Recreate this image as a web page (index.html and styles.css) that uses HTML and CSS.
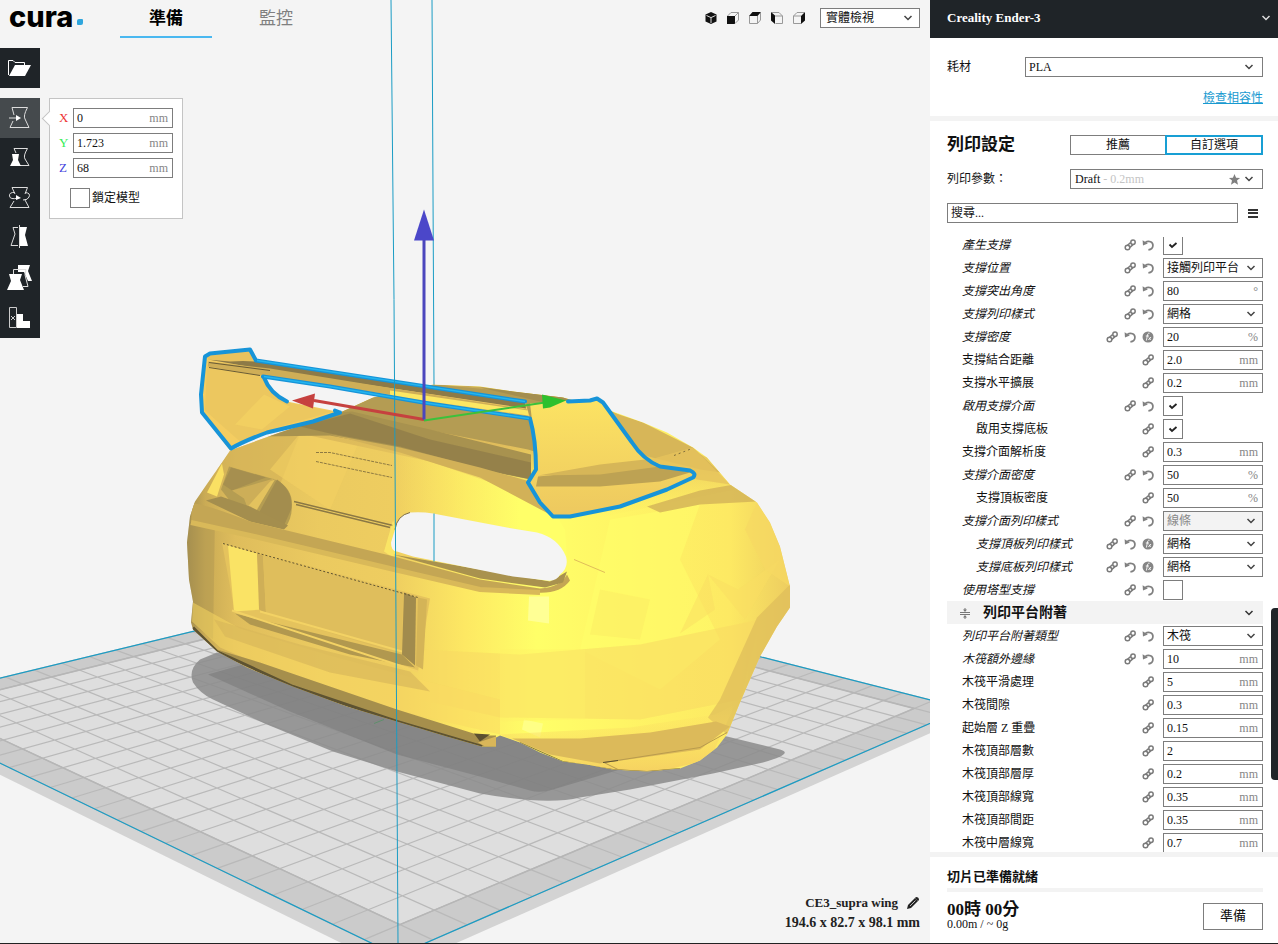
FILE: index.html
```html
<!DOCTYPE html>
<html lang="zh-Hant">
<head>
<meta charset="utf-8">
<title>Cura</title>
<link rel="stylesheet" href="styles.css">
</head>
<body>
<svg class="defs" aria-hidden="true">
  <symbol id="link" viewBox="0 0 14 14"><g fill="none" stroke="#7a7a7a" stroke-width="1.500"><circle cx="4.500" cy="9.500" r="2.300"/><circle cx="10" cy="4.200" r="2.200"/><path d="M4.500 7.200 7.600 4.600M6.900 9.400 10 6.600"/></g></symbol>
  <symbol id="undo" viewBox="0 0 14 14"><path d="M1.600 2.200 2 7.400 6.800 5.600Z" fill="#808080"/><path d="M4 4.600C8 1.800 12.300 4 11.900 7.800 11.700 10 10 11.400 7.400 11.800" fill="none" stroke="#808080" stroke-width="1.700"/></symbol>
  <symbol id="fx" viewBox="0 0 14 14"><circle cx="7" cy="7" r="5.500" fill="#858585"/><path d="M8.600 3.200C6.800 2.800 6.600 4.500 6.300 6L5.400 10.500M4.800 6H8M7.400 10 10 7M8 7.500 9.600 10" fill="none" stroke="#fff" stroke-width=".9"/></symbol>
</svg>
<div class="app">
  <main class="stage">
    <svg class="scene" viewBox="0 0 930 944" preserveAspectRatio="xMidYMid slice" role="img" aria-label="CE3_supra wing">
      <defs>
        <linearGradient id="paint" gradientUnits="userSpaceOnUse" x1="187" y1="0" x2="790" y2="0">
          <stop offset="0" stop-color="#a48e4f"/><stop offset=".03" stop-color="#caab55"/><stop offset=".08" stop-color="#dfbd5c"/><stop offset=".22" stop-color="#ebca60"/><stop offset=".34" stop-color="#eecd60"/><stop offset=".46" stop-color="#fde863"/><stop offset=".58" stop-color="#ffff68"/><stop offset=".72" stop-color="#fff565"/><stop offset=".9" stop-color="#fde963"/><stop offset="1" stop-color="#edcd60"/>
        </linearGradient>
        <linearGradient id="crest" gradientUnits="userSpaceOnUse" x1="390" y1="0" x2="520" y2="0"><stop offset="0" stop-color="#f6d862" stop-opacity="0"/><stop offset="1" stop-color="#ffff68"/></linearGradient>
        <linearGradient id="deck" x1="0" y1="0" x2="0" y2="1"><stop offset="0" stop-color="#c8aa55"/><stop offset=".45" stop-color="#e0bd5b"/><stop offset="1" stop-color="#fbe262" stop-opacity="0"/></linearGradient>
        <linearGradient id="fin" x1="0" y1="0" x2="0" y2="1"><stop offset="0" stop-color="#fce363"/><stop offset="1" stop-color="#edc85f"/></linearGradient>
        <linearGradient id="lower" x1="0" y1="0" x2="0" y2="1"><stop offset="0" stop-color="#fbdc62" stop-opacity="0"/><stop offset="1" stop-color="#f5d061"/></linearGradient>
        <clipPath id="bodyClip"><path d="M230 451 222 463 208 483 195 502 190 517 187 543 189 580 193 602 191 623 193 630 217 652 247 668 293 687 347 707 397 722 447 737 482 747H496V738L500 736 520 743 540 753 563 762 587 765 613 770 647 772 680 769 700 761 717 748 727 735 740 703 760 657 777 627 790 608V587L780 547 770 523 757 503 730 485 707 458 693 448 667 433 643 423 610 411 563 398 513 392 480 387 433 385 373 398 340 413 280 433Z"/></clipPath>
      </defs>
      <g id="bed"></g>
      <path d="M217 653 200 660Q188 670 193 683 200 694 213 700L267 725 333 752 397 772 480 794Q547 806 580 798L630 790 713 774 763 763Q795 754 780 750L727 737Z" fill="#8b8b8b" opacity=".85"/>
      <path d="M208 675 260 660 500 730 620 770 553 790Q540 794 530 791L480 777 397 755 290 712Z" fill="#7f7f7f" opacity=".7"/>
      <path d="M374 724 384 720" stroke="#5f8f6c"/>
      <path d="M432 0 434 386" stroke="#1a9cc4"/>
      <g clip-path="url(#bodyClip)">
        <path d="M180 380H800V780H180Z" fill="url(#paint)"/>
        <!-- facets -->
        <path d="M193 502 215 515 213 640 187 620V520Z" fill="#a8924f" opacity=".4"/>
        <path d="M231 451 262 436 300 434 278 490 216 470Z" fill="#d2b157" opacity=".6"/>
        <path d="M300 434 360 440 330 510 270 470Z" fill="#f3d063" opacity=".6"/>
        <path d="M390 447 480 466 540 490 565 530 567 560 540 533 480 523 400 512 385 480Z" fill="url(#crest)"/>
        <path d="M610 520 700 505 680 560 720 640 660 690 580 650Z" fill="#ffff69" opacity=".5"/>
        <path d="M708 575 680 634 715 610ZM708 575 738 590 780 560 745 620Z" fill="#fade62" opacity=".5"/>
        <path d="M574 560 605 573" stroke="#e0bd5a"/>
        <path d="M600 590 650 600 640 640 590 635Z" fill="#fae260" opacity=".3"/>
        <path d="M420 650 520 655 640 645 760 620 740 700 640 720 500 718 420 700Z" fill="#f8d962" opacity=".55"/>
        <path d="M529 597H549V624L528 621Z" fill="#ffff95"/>
        <path d="M524 720 543 724 540 738 522 730Z" fill="#ffff86"/>
        <path d="M500 650H585V720L500 722Z" fill="#fff066" opacity=".4"/>
        <!-- roof and rear glass -->
        <path d="M270 437 340 413 373 398 433 385 480 387 570 398 610 411 707 458 735 490 590 520 540 500 430 462 300 434Z" fill="url(#deck)"/>
        <path d="M340 413 373 398 433 385 513 392 563 398 600 412 560 460 528 450 400 425Z" fill="#b49c53"/>
        <path d="M480 388 563 398 640 424 600 412 540 402Z" fill="#a48e4f"/>
        <path d="M262 437 340 413 352 412 430 430 531 455V480L480 470 400 449 330 436Z" fill="#a8924f"/>
        <path d="M300 427 350 414 430 440 531 463V480L480 469 400 447 330 434Z" fill="#8d7b49" opacity=".7"/>
        <path d="M330 435 400 448 480 468 530 482 550 515 480 478 400 453Z" fill="#d2b158"/>
        <path d="M610 412 643 423 693 448 720 473 700 470 640 455Z" fill="#d7b658"/>
        <path d="M647 507 700 491 734 485 757 502 700 505 660 513Z" fill="#d2b257" opacity=".8"/>
        <path d="M650 460 693 448 730 485 697 480Z" fill="#e6c35c" opacity=".8"/>
        <path d="M674 456 692 449" stroke="#7f6e3b" stroke-dasharray="2 3"/>
        <path d="M757 503 770 523 780 547 790 587 765 570 745 530Z" fill="#f7d963" opacity=".7"/>
        <path d="M790 585 757 618 720 700 708 718 727 735 790 610Z" fill="#dfbd5b" opacity=".75"/>
        <!-- lamp recess -->
        <path d="M222 464 207 493 217 497 224 475Z" fill="#fae063"/>
        <path d="M229 467 275 480Q292 488 292 505 292 520 285 528L235 508 221 490Z" fill="#b59d52"/>
        <path d="M231 468 266 478 232 491 223 485Z" fill="#a68f4f"/>
        <path d="M232 491 274 479 252 520 244 499Z" fill="#cdae58"/>
        <path d="M270 482 275 480 252 518 247 508Z" fill="#e3c25e"/>
        <path d="M277 480Q294 492 291 510L284 526 258 515Z" fill="#a38d4e"/>
        <path d="M221 497 250 507 288 526 284 530 250 522 206 501Z" fill="#a48e4e"/>
        <path d="M316 453 330 453 392 466M316 462 392 478" fill="none" stroke="#8e7a42" stroke-dasharray="3 1"/>
        <path d="M294 502 393 526M296 505 390 528" stroke="#8b7844" stroke-width="1.500"/>
        <path d="M393 521 384 552 393 558 402 543Z" fill="#fff068" opacity=".7"/>
        <!-- bumper ridges -->
        <path d="M192 503Q215 508 250 522L320 539 390 556 480 580 540 589Q560 588 567 575L570 581Q560 595 535 593L480 590 390 570 260 538 191 524Z" fill="#c4a654"/>
        <path d="M191 523 250 536 390 569 480 590 540 593" fill="none" stroke="#d9b959" stroke-width="5"/>
        <path d="M393 555 480 570 550 582 567 572 563 583 545 588 480 579Z" fill="#a9924e"/>
        <!-- plate recess -->
        <path d="M222 543 430 599 418 672 235 614Z" fill="#e5c35d"/>
        <path d="M228 546 257 554 262 610 234 612Z" fill="#fae365"/>
        <path d="M257 554 263 556 266 614 259 610Z" fill="#cfaf57"/>
        <path d="M263 556 403 593 402 655 266 614Z" fill="#dfbe5c"/>
        <path d="M235 614 402 655 415 668 350 655 250 625Z" fill="#b1984f"/>
        <path d="M232 611 418 672M260 612 402 652" stroke="#f3d264" stroke-width="2"/>
        <path d="M404 593 416 598 415 666 402 655Z" fill="#a18b4d"/>
        <path d="M418 598 427 600 423 670 416 666Z" fill="#d4b457"/>
        <path d="M223 544 418 598" stroke="#5f5330" stroke-dasharray="2 2"/>
        <!-- lower bumper -->
        <path d="M193 603 240 629 330 656 420 680 500 700 500 735 330 695 220 648 192 622Z" fill="#f9d962" opacity=".5"/>
        <path d="M214 620 300 645 410 672 430 692 330 673 225 637Z" fill="#d8b85a" opacity=".7"/>
        <path d="M500 735 630 728 715 715 735 705 710 760 647 775 580 768Z" fill="url(#lower)"/>
        <path d="M512 739 580 739 650 733 716 722 730 727 700 750 600 764 550 755Z" fill="#dcba5a"/>
        <path d="M217 650 260 663 397 710 480 736 496 736V748H482L397 724 293 689Z" fill="#a68f4c"/>
        <path d="M193 628 217 652 293 687 397 722 482 747" fill="none" stroke="#5d5231" stroke-width="3"/>
        <path d="M474 734 490 735 480 742Z" fill="#5b5030"/><path d="M478 743 496 737V747H485Z" fill="#d9b659"/>
        <path d="M520 743 563 762 613 770 647 772 680 769" fill="none" stroke="#8a773f"/>
        <path d="M604 763 700 748 727 733M604 763 618 770" fill="none" stroke="#b99b4e"/>
        <path d="M603 763 618 761" stroke="#5d5231"/>
      </g>
      <path d="M410 513Q397 516 395 530L391 543Q391 552 397 552L413 557 463 567 513 577 547 581Q557 582 560 575 569 568 566 557 558 538 537 533L507 528 433 514Q422 512 410 513Z" fill="#f4f4f4"/>
      <path d="M410 513Q397 516 395 530" fill="none" stroke="#7d6d42"/>
      <path d="M434 514V562" stroke="#1a9cc4"/>
      <!-- spoiler -->
      <path d="M205 357 250 350 256 361 525 402 530 418 423 403 330 387 263 377Q270 394 287 402L332 411 340 413 313 422 267 433Q243 442 230 451L201 413Z" fill="#f4cd61"/>
      <path d="M207 365 264 378Q270 395 288 403L333 412 280 427 240 442 205 411Z" fill="#ecc75f"/>
      <path d="M235 425 264 395 290 407 262 430Z" fill="#f8d764" opacity=".5"/>
      <path d="M208 360 230 361 257 362 525 403 526 409 400 390 270 371Z" fill="#8d7a47"/>
      <path d="M208 362 270 369 400 390 528 410V417L410 398 260 376 208 367Z" fill="#cfae57"/>
      <path d="M390 391 528 411V416L390 396Z" fill="#fce763"/>
      <path d="M209 363 270 371M209 368 260 376" stroke="#685b36"/>
      <path d="M207 356 250 350 256 361 230 362 208 360Z" fill="#e8c25d"/>
      <path d="M530 404 597 399 603 402 620 425 637 450 648 460 670 468 696 475 667 490 620 507 570 518H553L540 503 528 483 536 470 535 445Z" fill="url(#fin)"/>
      <path d="M538 477 600 471 650 464 690 473 660 482 600 487 536 487Z" fill="#bda253"/>
      <path d="M538 476 600 465 645 460 660 467 600 475Z" fill="#d6b658"/>
      <g fill="none" stroke="#1794d8" stroke-width="4" stroke-linejoin="round" stroke-linecap="round">
        <path d="M340 413 335 411M340 413 313 422 267 433Q243 442 231 449L202 413 201 395 205 357 210 354 250 350 256 361 525 402"/>
        <path d="M263 377 330 387 423 403 530 419Q536 440 536 470L528 483 540 503 553 517H570L620 507 667 490 693 478Q697 474 690 471L660 467Q643 460 632 443L603 403 597 399 590 401 568 402"/>
        <path d="M264 378Q270 394 287 402"/>
      </g>
      <path d="M257 361 525 402M264 377 330 387 423 403 529 419" fill="none" stroke="#24b5ee" stroke-width="1.500"/>
      <path d="M391 0 394 300 398 944" fill="none" stroke="#1a9cc4"/>
      <g stroke-width="3">
        <path d="M424 420 314 401" stroke="#c6413f"/><path d="M292 401 315 394 313 409Z" fill="#c6413f"/>
        <path d="M424 421 545 403" stroke="#3bc13b" stroke-width="2"/><path d="M566 401 542 395 543 409 550 408Z" fill="#2ec02e"/>
        <path d="M424 420V238" stroke="#4b46bd"/><path d="M424 210 414 241H434Z" fill="#4b47c9"/>
      </g>
    </svg>
    <div class="stage-ui">
      <header class="topbar">
        <div class="brand">cura<span class="brand-dot"></span></div>
        <nav class="tabs"><button class="tab tab-active">準備</button><button class="tab">監控</button></nav>
        <div class="views">
          <button class="view" aria-label="3D"><svg viewBox="0 0 14 14"><path d="M7 1 12.500 3.600V10.400L7 13 1.500 10.400V3.600Z" fill="#111"/><path d="M2.500 4.500 7 6.600 11.500 4.500M7 6.600V12" fill="none" stroke="#ddd"/></svg></button>
          <button class="view" aria-label="Front"><svg viewBox="0 0 14 14"><path d="M1 5H9V13H1Z" fill="#111"/><path d="M1.500 5 5 1.500H12.500V9L9 12.500M9 5 12.500 1.500" fill="none" stroke="#999"/></svg></button>
          <button class="view" aria-label="Top"><svg viewBox="0 0 14 14"><path d="M1 5 4.500 1H13L9.500 5Z" fill="#111"/><path d="M1.500 5V12.500H9.500V5M9.500 12.500 12.500 9V2" fill="none" stroke="#999"/></svg></button>
          <button class="view" aria-label="Left"><svg viewBox="0 0 14 14"><path d="M1 1 5 4.500V13L1 9.500Z" fill="#111"/><path d="M2 1.500H9L12.500 5V12.500H5.500M5 5H12.500" fill="none" stroke="#999"/></svg></button>
          <button class="view" aria-label="Right"><svg viewBox="0 0 14 14"><path d="M9 5 13 1V9.500L9 13Z" fill="#111"/><path d="M9 12.500H1.500V5L5 1.500H12M1.500 5H9" fill="none" stroke="#999"/></svg></button>
          <select class="box view-mode" aria-label="檢視模式"><option>實體檢視</option></select>
        </div>
      </header>
      <div class="workspace">
        <div class="tools">
          <button class="tool" aria-label="開啟"><svg viewBox="0 0 40 40"><path d="M8.500 27V12.500H13L15 14.500H24.500V18" fill="none" stroke="#fff"/><path d="M15 17H31L25 28H9Z" fill="#fff"/></svg></button>
          <div class="tool-group">
            <button class="tool tool-active" aria-label="移動"><svg viewBox="0 0 40 40"><path d="M14 17 12 9.500H27.500Q23 18 25 21L29 29.500H10L13 23M9 20H19" fill="none" stroke="#ddd"/><path d="M16 17 21 20 16 23Z" fill="#fff"/></svg></button>
            <button class="tool" aria-label="縮放"><svg viewBox="0 0 40 40"><path d="M16 15 14 10.500H27.500Q23 18 25 21L29 27.500H20" fill="none" stroke="#ddd"/><path d="M12 16H19L18 22 21 28H10L13 22Z" fill="#fff"/></svg></button>
            <button class="tool" aria-label="旋轉"><svg viewBox="0 0 40 40"><path d="M15 16 12 9.500H27.500L25 16M25 22 29 29.500H10L14 23M18 20Q10 22 9.500 18 9 14 15 14.500M25 14.500Q31 15 29 19 28 22 23 22" fill="none" stroke="#ddd"/><path d="M16 17 21 20 16 22Z" fill="#fff"/></svg></button>
            <button class="tool" aria-label="鏡像"><svg viewBox="0 0 40 40"><path d="M18 9.500H13L15 16 11 27.500H18M19.500 7V30" fill="none" stroke="#ddd"/><path d="M20 9H27L25 17 28 28H20Z" fill="#fff"/></svg></button>
            <button class="tool" aria-label="個別模型設定"><svg viewBox="0 0 40 40"><path d="M18 7H30L28 13 32 23H28L24 14H18Z" fill="#fff"/><path d="M13.500 16V11.500H26L25 17 28 28.500H23" fill="none" stroke="#ddd"/><path d="M9 16H22L20 22 24 32H7L11 23Z" fill="#fff"/></svg></button>
            <button class="tool" aria-label="支撐阻斷"><svg viewBox="0 0 40 40"><path d="M9.500 9.500H16.500V29.500H9.500ZM11 18 15 22M15 18 11 22" fill="none" stroke="#ccc"/><path d="M17 16H23V23H30V30H17Z" fill="#fff"/></svg></button>
          </div>
        </div>
        <form class="popup">
          <div class="axis"><label class="axis-x" for="px">X</label><div class="box field"><input id="px" value="0"><span>mm</span></div></div>
          <div class="axis"><label class="axis-y" for="py">Y</label><div class="box field"><input id="py" value="1.723"><span>mm</span></div></div>
          <div class="axis"><label class="axis-z" for="pz">Z</label><div class="box field"><input id="pz" value="68"><span>mm</span></div></div>
          <label class="lock"><input class="check" type="checkbox">鎖定模型</label>
        </form>
      </div>
      <footer class="model-info">
        <div class="model-name">CE3_supra wing <svg viewBox="0 0 14 14"><path d="M1 13 2 9 9 2 12 5 5 12Z" fill="#222"/><path d="M10 1Q13 1 13 4L12 5 9 2Z" fill="#222"/><path d="M4 10 9.500 4.500" stroke="#bbb"/></svg></div>
        <div class="model-size">194.6 x 82.7 x 98.1 mm</div>
      </footer>
    </div>
  </main>

  <aside class="sidebar">
    <button class="machine">Creality Ender-3<svg viewBox="0 0 10 8"><path d="M1.500 2 5 5.500 8.500 2" fill="none" stroke="#ddd" stroke-width="1.500"/></svg></button>
    <section class="material">
      <div class="material-row"><label for="mat">耗材</label><select id="mat" class="box"><option>PLA</option></select></div>
      <a class="compat" href="#">檢查相容性</a>
    </section>
    <section class="profile">
      <div class="profile-row"><h2>列印設定</h2><div class="modes"><button class="mode">推薦</button><button class="mode mode-active">自訂選項</button></div></div>
      <div class="profile-row"><span>列印參數：</span><button class="box quality"><span>Draft<span class="faint"> - 0.2mm</span></span><svg viewBox="0 0 14 14"><path d="M7 1 8.700 5.100 13 5.400 9.700 8.200 10.800 12.600 7 10.200 3.200 12.600 4.300 8.200 1 5.400 5.300 5.100Z" fill="#808080"/></svg></button></div>
      <div class="search-row"><input class="box search" placeholder="搜尋..." aria-label="搜尋"><button class="menu" aria-label="選單"></button></div>
    </section>
    <div class="list">
      <div class="rows">
        <div class="row mod"><label for="s1">產生支撐</label><svg><use href="#link"/></svg><svg><use href="#undo"/></svg><div class="cell"><input id="s1" class="check" type="checkbox" checked></div></div>
        <div class="row mod"><label for="s2">支撐位置</label><svg><use href="#link"/></svg><svg><use href="#undo"/></svg><div class="cell"><select id="s2" class="box"><option>接觸列印平台</option></select></div></div>
        <div class="row mod"><label for="s3">支撐突出角度</label><svg><use href="#link"/></svg><svg><use href="#undo"/></svg><div class="cell box field"><input id="s3" value="80"><span>°</span></div></div>
        <div class="row mod"><label for="s4">支撐列印樣式</label><svg><use href="#link"/></svg><svg><use href="#undo"/></svg><div class="cell"><select id="s4" class="box"><option>網格</option></select></div></div>
        <div class="row mod"><label for="s5">支撐密度</label><svg><use href="#link"/></svg><svg><use href="#undo"/></svg><svg><use href="#fx"/></svg><div class="cell box field"><input id="s5" value="20"><span>%</span></div></div>
        <div class="row"><label for="s6">支撐結合距離</label><svg><use href="#link"/></svg><div class="cell box field"><input id="s6" value="2.0"><span>mm</span></div></div>
        <div class="row"><label for="s7">支撐水平擴展</label><svg><use href="#link"/></svg><div class="cell box field"><input id="s7" value="0.2"><span>mm</span></div></div>
        <div class="row mod"><label for="s8">啟用支撐介面</label><svg><use href="#link"/></svg><svg><use href="#undo"/></svg><div class="cell"><input id="s8" class="check" type="checkbox" checked></div></div>
        <div class="row sub"><label for="s9">啟用支撐底板</label><svg><use href="#link"/></svg><div class="cell"><input id="s9" class="check" type="checkbox" checked></div></div>
        <div class="row"><label for="s10">支撐介面解析度</label><svg><use href="#link"/></svg><div class="cell box field"><input id="s10" value="0.3"><span>mm</span></div></div>
        <div class="row mod"><label for="s11">支撐介面密度</label><svg><use href="#link"/></svg><svg><use href="#undo"/></svg><div class="cell box field"><input id="s11" value="50"><span>%</span></div></div>
        <div class="row sub"><label for="s12">支撐頂板密度</label><svg><use href="#link"/></svg><div class="cell box field"><input id="s12" value="50"><span>%</span></div></div>
        <div class="row mod"><label for="s13">支撐介面列印樣式</label><svg><use href="#link"/></svg><svg><use href="#undo"/></svg><div class="cell"><select id="s13" class="box" disabled><option>線條</option></select></div></div>
        <div class="row mod sub"><label for="s14">支撐頂板列印樣式</label><svg><use href="#link"/></svg><svg><use href="#undo"/></svg><svg><use href="#fx"/></svg><div class="cell"><select id="s14" class="box"><option>網格</option></select></div></div>
        <div class="row mod sub"><label for="s15">支撐底板列印樣式</label><svg><use href="#link"/></svg><svg><use href="#undo"/></svg><svg><use href="#fx"/></svg><div class="cell"><select id="s15" class="box"><option>網格</option></select></div></div>
        <div class="row mod"><label for="s16">使用塔型支撐</label><svg><use href="#link"/></svg><svg><use href="#undo"/></svg><div class="cell"><input id="s16" class="check" type="checkbox"></div></div>
        <button class="category"><svg viewBox="0 0 14 14"><path d="M2 6.500H12M2 8.500H12M7 2V5M7 13V10" stroke="#777"/><path d="M5 3.500H9L7 6ZM5 11.500H9L7 9Z" fill="#777"/></svg><span>列印平台附著</span><svg class="chev" viewBox="0 0 10 8"><path d="M1.500 2 5 5.500 8.500 2" fill="none" stroke="#333" stroke-width="1.500"/></svg></button>
        <div class="row mod"><label for="s17">列印平台附著類型</label><svg><use href="#link"/></svg><svg><use href="#undo"/></svg><div class="cell"><select id="s17" class="box"><option>木筏</option></select></div></div>
        <div class="row mod"><label for="s18">木筏額外邊緣</label><svg><use href="#link"/></svg><svg><use href="#undo"/></svg><div class="cell box field"><input id="s18" value="10"><span>mm</span></div></div>
        <div class="row"><label for="s19">木筏平滑處理</label><svg><use href="#link"/></svg><div class="cell box field"><input id="s19" value="5"><span>mm</span></div></div>
        <div class="row"><label for="s20">木筏間隙</label><svg><use href="#link"/></svg><div class="cell box field"><input id="s20" value="0.3"><span>mm</span></div></div>
        <div class="row"><label for="s21">起始層 Z 重疊</label><svg><use href="#link"/></svg><div class="cell box field"><input id="s21" value="0.15"><span>mm</span></div></div>
        <div class="row"><label for="s22">木筏頂部層數</label><svg><use href="#link"/></svg><div class="cell box field"><input id="s22" value="2"></div></div>
        <div class="row"><label for="s23">木筏頂部層厚</label><svg><use href="#link"/></svg><div class="cell box field"><input id="s23" value="0.2"><span>mm</span></div></div>
        <div class="row"><label for="s24">木筏頂部線寬</label><svg><use href="#link"/></svg><div class="cell box field"><input id="s24" value="0.35"><span>mm</span></div></div>
        <div class="row"><label for="s25">木筏頂部間距</label><svg><use href="#link"/></svg><div class="cell box field"><input id="s25" value="0.35"><span>mm</span></div></div>
        <div class="row"><label for="s26">木筏中層線寬</label><svg><use href="#link"/></svg><div class="cell box field"><input id="s26" value="0.7"><span>mm</span></div></div>
      </div>
      <div class="thumb"></div>
    </div>
    <footer class="job">
      <div class="status">切片已準備就緒</div>
      <div class="progress"></div>
      <div class="job-row"><div><div class="time">00時 00分</div><div>0.00m / ~ 0g</div></div><button class="slice">準備</button></div>
    </footer>
  </aside>
</div>
<script src="scene.js"></script>
</body>
</html>
```
FILE: scene.js
```js
// Projects bed coordinates (0..1 on each side) to the scene and draws the build plate.
const front = [397, 956], right = [964, 709], back = [432, 574], left = [-117, 707];
const d1 = [right[0] - back[0], right[1] - back[1]];
const d2 = [left[0] - back[0], left[1] - back[1]];
const d3 = [front[0] - right[0] + back[0] - left[0], front[1] - right[1] + back[1] - left[1]];
const det = d1[0] * d2[1] - d2[0] * d1[1];
const g = (d3[0] * d2[1] - d2[0] * d3[1]) / det;
const h = (d1[0] * d3[1] - d3[0] * d1[1]) / det;

function project(u, v) {
  const w = 1 + g * u + h * v;
  return [0, 1].map(i =>
    ((right[i] - front[i] + g * right[i]) * u + (left[i] - front[i] + h * left[i]) * v + front[i]) / w
  ).map(n => n.toFixed(1)).join(' ');
}

function quad(a, b) {
  return `M${project(a, a)}L${project(b, a)}L${project(b, b)}L${project(a, b)}Z`;
}

const cells = 22;
let lines = '';
for (let i = 0; i <= cells; i++) {
  const t = i / cells;
  lines += `M${project(t, 0)}L${project(t, 1)}M${project(0, t)}L${project(1, t)}`;
}
const margin = 1 / cells;
document.getElementById('bed').innerHTML = `
  <path d="${quad(-0.02, 1)}" fill="#d3d3d3"/>
  <path d="${quad(0, 1)}" fill="#cbcbcb"/>
  <path d="${quad(margin, 1 - margin)}" fill="#dedede"/>
  <path d="${lines}" fill="none" stroke="#b9b9b9" stroke-width="1.2"/>
  <path d="${quad(margin, 1 - margin)}" fill="none" stroke="#b6b6b6" stroke-width="1.5"/>
  <path d="${quad(0, 1)}" fill="none" stroke="#1a9cc4" stroke-width="1.2"/>`;
```
FILE: styles.css
```css
* { box-sizing: border-box; }
body {
  margin: 0;
  font: 12px/16px "Liberation Serif", "Noto Sans CJK TC", serif;
  color: #111;
  background: #f4f4f4;
}
button, input, select { font: inherit; color: inherit; border-radius: 0; }
button { border: 0; padding: 0; background: none; }
h2 { margin: 0; font-size: 17px; line-height: 20px; }
svg { display: block; }
.defs { position: absolute; width: 0; height: 0; }
.app { display: flex; height: 100vh; border-bottom: 1px solid #222; }

/* Shared controls */
.box { height: 20px; border: 1px solid #7d7d7d; background-color: #fff; }
select.box {
  appearance: none;
  width: 100%;
  padding: 0 16px 0 3px;
  background-image: url("data:image/svg+xml,%3Csvg xmlns='http://www.w3.org/2000/svg' width='10' height='8'%3E%3Cpath d='M1.500 2 5 5.500 8.500 2' fill='none' stroke='%23444' stroke-width='1.500'/%3E%3C/svg%3E");
  background-repeat: no-repeat;
  background-position: right 6px center;
}
#mat { background-position: right 8px center; }
select.box:disabled { background-color: #f3f3f3; color: #888; opacity: 1; }
.field { display: flex; align-items: center; padding: 0 4px 0 3px; }
.field input { flex: 1; min-width: 0; width: 0; height: 16px; border: 0; padding: 0; outline: 0; background: none; }
.field span { color: #858585; }
.check {
  appearance: none;
  display: block;
  width: 20px;
  height: 20px;
  margin: 0;
  border: 1px solid #7d7d7d;
  background: #fff;
}
.check:checked {
  background: #fff url("data:image/svg+xml,%3Csvg xmlns='http://www.w3.org/2000/svg' width='10' height='8'%3E%3Cpath d='M1.500 3.500 4 6 8.500 2' fill='none' stroke='%23222' stroke-width='1.800'/%3E%3C/svg%3E") no-repeat center;
}

/* Viewport */
.stage { flex: 1; min-width: 0; display: grid; background: #f4f4f4; overflow: hidden; }
.scene, .stage-ui { grid-area: 1 / 1; width: 100%; height: 100%; min-height: 0; }
.stage-ui { position: relative; display: flex; flex-direction: column; }
.topbar { display: flex; height: 38px; padding: 0 10px 0 9px; }
.brand { display: flex; align-items: center; width: 111px; height: 34px; font: 800 29px/34px Inter, sans-serif; color: #000; }
.brand-dot { width: 6px; height: 6px; margin: 10px 0 0 4px; border-radius: 2px 1px 2px 1px; background: #2fa6dd; }
.tabs { display: flex; gap: 18px; }
.tab { width: 92px; padding-top: 1px; font-size: 17px; color: #808080; border-bottom: 2px solid transparent; }
.tab-active { font-weight: bold; color: #000; border-color: #4ab8f0; }
.views { display: flex; align-items: center; gap: 8px; height: 36px; margin-left: auto; }
.view svg { width: 14px; height: 14px; }
.views .view-mode { width: 100px; margin-left: 6px; padding-left: 5px; }
.workspace { display: flex; align-items: flex-start; padding-top: 10px; }
.tools { display: grid; gap: 10px; }
.tool { display: block; width: 40px; height: 40px; background: #1f2428; }
.tool-active { background: #454a4d; }
.tool svg { width: 40px; height: 40px; }
.popup {
  position: relative;
  display: grid;
  gap: 5px;
  width: 134px;
  margin: 50px 0 0 9px;
  padding: 9px 9px 10px;
  border: 1px solid #c4c4c4;
  background: #fff;
}
.popup::before {
  content: "";
  position: absolute;
  top: 14px;
  left: -6px;
  width: 10px;
  height: 10px;
  border: solid #c4c4c4;
  border-width: 0 0 1px 1px;
  background: #fff;
  transform: rotate(45deg);
}
.axis { display: flex; align-items: center; }
.axis label { width: 14px; font-size: 13px; }
.axis .field { flex: 1; }
.axis-x { color: #e33; }
.axis-y { color: #3e5; }
.axis-z { color: #44d; }
.lock { display: flex; align-items: center; gap: 2px; margin-top: 5px; padding-left: 11px; }
.model-info { margin: auto 10px 10px; text-align: right; font-weight: bold; color: #222; line-height: 20px; }
.model-name { display: flex; justify-content: flex-end; align-items: center; gap: 8px; font-size: 13px; }
.model-name svg { width: 14px; height: 14px; }
.model-size { font-size: 14px; }

/* Sidebar */
.sidebar { flex: none; width: 348px; display: flex; flex-direction: column; background: #fff; }
.machine { display: flex; flex: none; align-items: center; justify-content: space-between; height: 38px; padding: 0 7px 3px 17px; background: #1f2428; color: #fff; font-size: 13px; font-weight: bold; }
.machine svg, .chev { width: 10px; height: 8px; }
.material { padding: 19px 15px 10px 17px; border-bottom: 5px solid #f3f3f3; }
.material-row { display: flex; align-items: center; }
.material-row label { width: 78px; }
.material-row select { flex: 1; }
.compat { display: block; margin-top: 13px; text-align: right; color: #189ad0; line-height: 16px; }
.profile { display: grid; gap: 14px; padding: 14px 15px 14px 17px; }
.profile-row { display: flex; justify-content: space-between; align-items: center; height: 20px; }
.modes { display: flex; width: 193px; }
.mode { flex: 1; height: 20px; border: 1px solid #7d7d7d; border-right: 0; }
.mode-active { border: 2px solid #189fd4; }
.quality { display: flex; justify-content: space-between; align-items: center; width: 193px; padding: 0 21px 0 4px; }
.quality {
  background: #fff url("data:image/svg+xml,%3Csvg xmlns='http://www.w3.org/2000/svg' width='10' height='8'%3E%3Cpath d='M1.500 2 5 5.500 8.500 2' fill='none' stroke='%23444' stroke-width='1.500'/%3E%3C/svg%3E") no-repeat right 8px center;
}
.quality svg { width: 13px; height: 13px; }
.faint { color: #c4c4c4; }
.search-row { display: flex; align-items: center; gap: 10px; padding-right: 5px; }
.search { flex: 1; min-width: 0; padding: 0 3px; }
.search::placeholder { color: #222; opacity: 1; }
.menu { width: 10px; height: 9px; border-top: 2px solid #333; border-bottom: 2px solid #333; padding: 1px 0; }
.menu::before { content: ""; display: block; height: 2px; background: #333; }
.list { flex: 1; min-height: 0; display: flex; justify-content: space-between; padding-left: 17px; overflow: hidden; }
.rows { flex: 1; margin: -4px 8px 0 0; }
.row { display: flex; align-items: center; height: 23px; padding-left: 15px; }
.row label { flex: 1; }
.row svg { width: 14px; height: 14px; margin-right: 4px; }
.row.sub { padding-left: 29px; }
.row.mod label { font-style: italic; }
.cell { width: 100px; margin-left: 4px; }
.category { display: flex; align-items: center; width: 100%; height: 23px; padding: 0 9px 0 11px; background: #f3f3f3; font-size: 14px; font-weight: bold; }
.category svg { width: 14px; height: 14px; }
.category span { flex: 1; padding-left: 11px; text-align: left; }
.category .chev { width: 10px; height: 8px; }
.thumb { flex: none; width: 7px; height: 172px; margin-top: 371px; border-radius: 4px 0 0 4px; background: #1f2428; }
.job { padding: 12px 15px 13px 17px; border-top: 5px solid #f3f3f3; }
.status { font-size: 13px; font-weight: bold; }
.progress { height: 4px; margin: 3px 0 10px; background: #f3f3f3; }
.job-row { display: flex; justify-content: space-between; align-items: center; line-height: 12px; }
.time { font-size: 17px; font-weight: bold; line-height: 16px; }
.slice { width: 60px; height: 27px; border: 1px solid #7d7d7d; font-size: 13px; }
```
